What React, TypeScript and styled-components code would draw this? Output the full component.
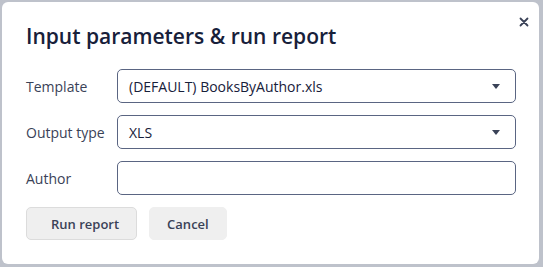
import styled, { createGlobalStyle } from "styled-components";

const GlobalStyle = createGlobalStyle`
  html, body {
    margin: 0;
    padding: 0;
    background: #bec2cb;
    font-family: "Open Sans", "Noto Sans", sans-serif;
  }
`;

const Backdrop = styled.div`
  width: 543px;
  height: 267px;
  padding: 2px 0 0 2px;
  box-sizing: border-box;
`;

const Dialog = styled.div`
  position: relative;
  width: 537px;
  height: 262px;
  box-sizing: border-box;
  background: #ffffff;
  border-radius: 6px;
  padding: 18px 23px 24px 24px;
  display: flex;
  flex-direction: column;
`;

const Title = styled.h2`
  margin: 0 0 17px;
  font-size: 21px;
  line-height: 32px;
  font-weight: 600;
  color: #17203a;
`;

const CloseButton = styled.button`
  position: absolute;
  top: 11px;
  right: 6px;
  width: 18px;
  height: 18px;
  padding: 0;
  border: none;
  background: none;
  display: flex;
  align-items: center;
  justify-content: center;
  cursor: pointer;
`;

const Form = styled.div`
  display: grid;
  grid-template-columns: 91px 1fr;
  row-gap: 12px;
  align-items: center;
`;

const Label = styled.label`
  font-size: 14px;
  color: #3a4257;
`;

const Field = styled.div<{ $select?: boolean }>`
  height: 34px;
  box-sizing: border-box;
  border: 1px solid #5a6582;
  border-radius: 5px;
  padding: 0 12px 0 11px;
  display: flex;
  align-items: center;
  justify-content: space-between;
  font-size: 14px;
  color: #17203a;
  cursor: ${(p) => (p.$select ? "pointer" : "text")};
`;

const Caret = styled.span`
  width: 0;
  height: 0;
  border-left: 4.5px solid transparent;
  border-right: 4.5px solid transparent;
  border-top: 5px solid #3a4257;
  margin-right: 3px;
`;

const Actions = styled.div`
  display: flex;
  gap: 12px;
  margin-top: 12px;
`;

const Button = styled.button<{ $primary?: boolean }>`
  height: 33px;
  box-sizing: border-box;
  padding: ${(p) => (p.$primary ? "0 17px 0 24px" : "0 17px")};
  border-radius: 5px;
  border: 1px solid ${(p) => (p.$primary ? "#dcdcdc" : "#efefef")};
  background: #efefef;
  font-family: "Open Sans", "Noto Sans", sans-serif;
  font-size: 13px;
  font-weight: 600;
  color: #3a4257;
  cursor: pointer;
`;

export default function App() {
  return (
    <>
      <GlobalStyle />
      <Backdrop>
        <Dialog>
          <CloseButton aria-label="Close">
            <svg width="10" height="10" viewBox="0 0 10 10">
              <path
                d="M1.5 1.5 L8.5 8.5 M8.5 1.5 L1.5 8.5"
                stroke="#3a4257"
                strokeWidth="1.8"
                strokeLinecap="round"
              />
            </svg>
          </CloseButton>
          <Title>Input parameters &amp; run report</Title>
          <Form>
            <Label>Template</Label>
            <Field $select>
              <span>(DEFAULT) BooksByAuthor.xls</span>
              <Caret />
            </Field>
            <Label>Output type</Label>
            <Field $select>
              <span>XLS</span>
              <Caret />
            </Field>
            <Label>Author</Label>
            <Field />
          </Form>
          <Actions>
            <Button $primary>Run report</Button>
            <Button>Cancel</Button>
          </Actions>
        </Dialog>
      </Backdrop>
    </>
  );
}
